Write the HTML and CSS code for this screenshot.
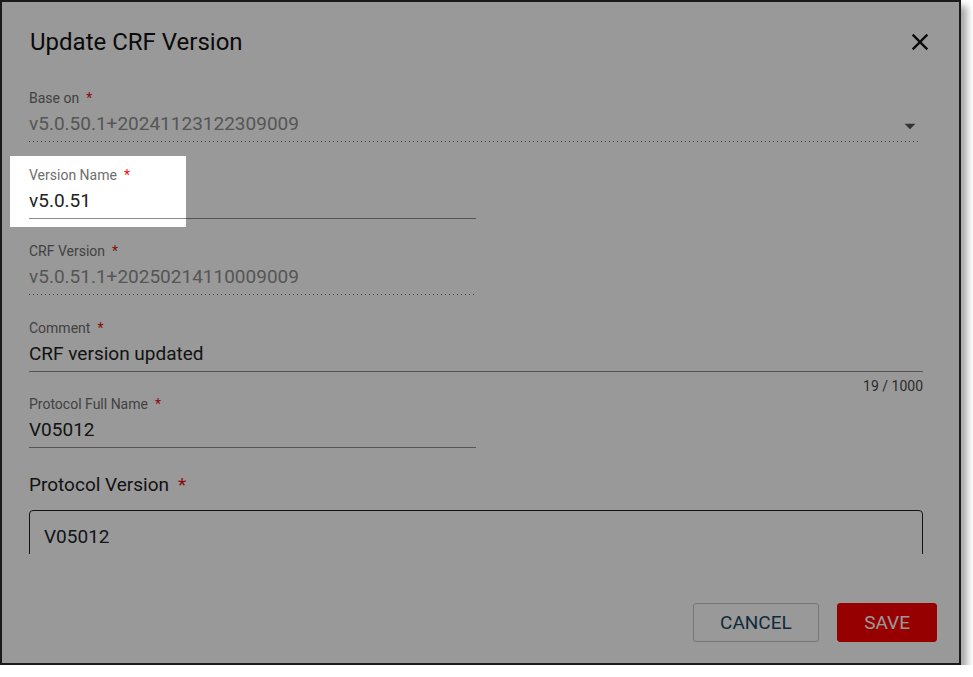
FILE: index.html
```html
<!DOCTYPE html>
<html lang="en">

<head>
  <meta charset="UTF-8">
  <meta name="viewport" content="width=device-width, initial-scale=1.0">
  <title>Update CRF Version</title>
  <link rel="stylesheet" href="styles.css">
</head>

<body>
  <div class="shot">
    <header class="dlg-head">
      <h2 class="dlg-title">Update CRF Version</h2>
      <button class="close-btn" aria-label="Close">
        <svg viewBox="0 0 24 24" width="28" height="28">
          <path d="M19 6.41L17.59 5 12 10.59 6.41 5 5 6.41 10.59 12 5 17.59 6.41 19 12 13.41 17.59 19 19 17.59 13.41 12z" />
        </svg>
      </button>
    </header>

    <div class="dlg-body">
      <div class="field select">
        <div class="lbl">Base on<span class="req">*</span></div>
        <div class="inp disabled">
          v5.0.50.1+20241123122309009
          <svg class="caret" viewBox="0 0 24 24" width="26" height="26"><path d="M7 10l5 5 5-5z" /></svg>
        </div>
      </div>

      <div class="field half">
        <div class="lbl">Version Name<span class="req">*</span></div>
        <div class="inp">v5.0.51</div>
      </div>

      <div class="field half">
        <div class="lbl">CRF Version<span class="req">*</span></div>
        <div class="inp disabled">v5.0.51.1+20250214110009009</div>
      </div>

      <div class="field">
        <div class="lbl">Comment<span class="req">*</span></div>
        <div class="inp">CRF version updated</div>
        <div class="counter">19 / 1000</div>
      </div>

      <div class="field half">
        <div class="lbl">Protocol Full Name<span class="req">*</span></div>
        <div class="inp">V05012</div>
      </div>

      <h3 class="section-title">Protocol Version<span class="req">*</span></h3>
      <div class="outlined">V05012</div>
    </div>

    <footer class="dlg-foot">
      <button class="btn btn-cancel">Cancel</button>
      <button class="btn btn-save">Save</button>
    </footer>

    <!-- callout: dims everything except the Version Name field -->
    <div class="spot"></div>
  </div>
</body>

</html>
```

FILE: styles.css
```css
body {
  margin: 0;
  background: #fff;
  font-family: Roboto, "Noto Sans", Arial, sans-serif;
}

.shot {
  position: relative;
  box-sizing: border-box;
  width: 961px;
  height: 665px;
  border: 2px solid #1a1a1a;
  background: #fff;
  overflow: hidden;
  display: flex;
  flex-direction: column;
  box-shadow: 6px 6px 7px rgba(0, 0, 0, 0.35);
}

.dlg-head {
  display: flex;
  align-items: center;
  justify-content: space-between;
  padding: 24px 25px 0 28px;
}

.dlg-title {
  margin: 0;
  font-size: 24px;
  line-height: 32px;
  font-weight: 400;
  color: #111;
}

.close-btn {
  border: 0;
  padding: 0;
  background: none;
  display: flex;
  fill: #111;
}

.dlg-body {
  height: 496px;
  overflow: hidden;
  padding: 32px 36px 0 27px;
  box-sizing: border-box;
  flex-shrink: 0;
}

.field {
  height: 76.5px;
}

.half {
  width: 50%;
}

.select {
  margin-right: 3px;
}

.lbl {
  font-size: 14px;
  line-height: 16px;
  color: #6e6e6e;
}

.req {
  margin-left: 7px;
  color: #e81010;
}

.inp {
  position: relative;
  margin-top: 6px;
  padding-bottom: 5px;
  font-size: 19px;
  line-height: 24px;
  color: #222;
  border-bottom: 1px solid #8c8c8c;
}

/* disabled fields get a dotted underline */
.inp.disabled {
  color: #8f8f8f;
  border-bottom: 0;
  padding-bottom: 6px;
  background: repeating-linear-gradient(to right, #6e6e6e 0 1px, transparent 1px 4px) left bottom / 100% 1px no-repeat;
}

.caret {
  position: absolute;
  right: -3px;
  top: 1px;
  fill: #555;
}

.counter {
  margin-top: 6px;
  text-align: right;
  font-size: 14px;
  line-height: 16px;
  color: #4a4a4a;
}

.section-title {
  margin: 0 0 13.5px;
  font-size: 19px;
  line-height: 24px;
  font-weight: 400;
  color: #1d1d1d;
}

.section-title .req {
  margin-left: 9px;
}

.outlined {
  border: 1px solid #222;
  border-radius: 4px;
  padding: 13.5px 14px;
  font-size: 19px;
  line-height: 24px;
  height: 80px;
  color: #1a2530;
}

.dlg-foot {
  display: flex;
  justify-content: flex-end;
  gap: 18px;
  padding: 49px 22px 0 0;
}

.btn {
  height: 39px;
  padding: 0 26.5px;
  font-family: inherit;
  font-size: 19px;
  text-transform: uppercase;
  border-radius: 3px;
  cursor: pointer;
}

.btn-cancel {
  background: #fff;
  color: #1a4864;
  border: 1px solid #c4c4c4;
}

.btn-save {
  background: #fa0000;
  color: #fff;
  border: 1px solid #fa0000;
  padding: 0 26px;
}

.spot {
  position: absolute;
  left: 8px;
  top: 154px;
  width: 176px;
  height: 71px;
  z-index: 2;
  pointer-events: none;
  box-shadow: 0 0 0 1600px rgba(0, 0, 0, 0.4);
}
```
